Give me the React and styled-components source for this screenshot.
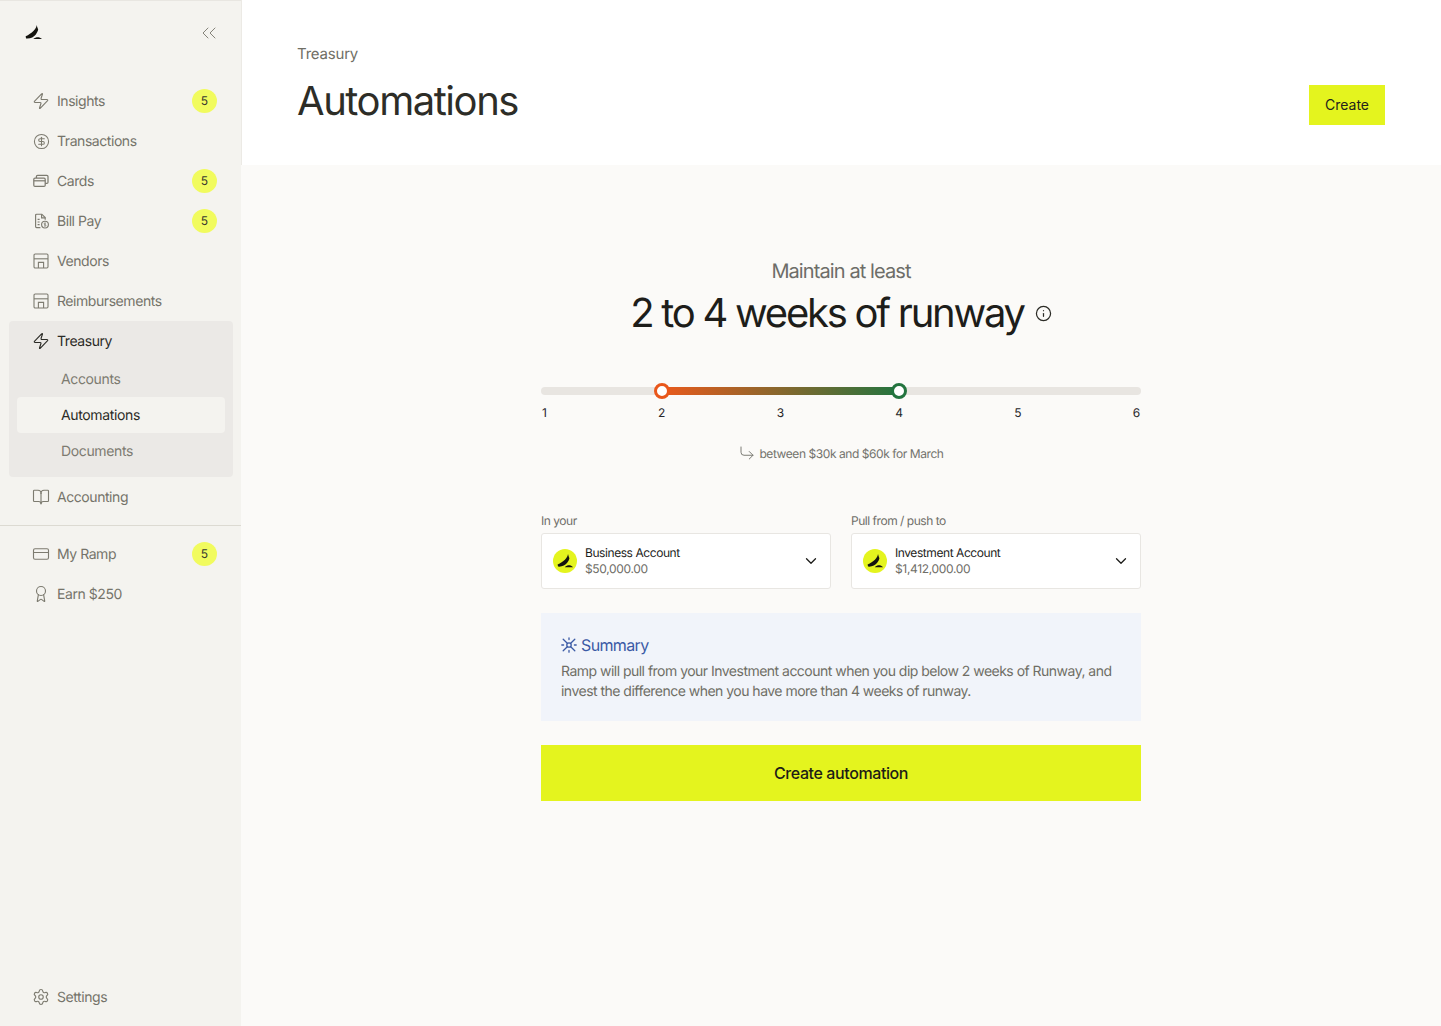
import styled, { createGlobalStyle } from "styled-components";
import {
  Award,
  BookOpen,
  ChevronDown,
  ChevronsLeft,
  CircleDollarSign,
  CornerDownRight,
  CreditCard,
  Info,
  Settings,
  Zap,
} from "lucide-react";

const GlobalStyle = createGlobalStyle`
  html, body {
    margin: 0;
    padding: 0;
    background: #fff;
    font-family: Inter, "Liberation Sans", sans-serif;
    text-rendering: geometricPrecision;
    -webkit-font-smoothing: antialiased;
  }
  * { box-sizing: border-box; }
`;

const Page = styled.div`
  display: flex;
  width: 1441px;
  height: 1026px;
  overflow: hidden;
`;

const Sidebar = styled.aside`
  display: flex;
  flex-direction: column;
  flex: 0 0 241px;
  height: 100%;
  padding-bottom: 9px;
  background: #f4f3ef;
  border-top: 1px solid #e8e6e1;
`;

const LogoRow = styled.div`
  display: flex;
  align-items: center;
  justify-content: space-between;
  height: 63px;
  padding: 0 20px 0 25px;
  margin-bottom: 17px;
`;

const CollapseButton = styled.span`
  display: flex;
  color: #85837a;
`;

const NavList = styled.nav`
  display: flex;
  flex-direction: column;
  padding: 0 8px 0 9px;
`;

const NavRow = styled.div`
  display: flex;
  align-items: center;
  gap: 7px;
  height: 40px;
  padding: 0 16px 0 23px;
  font-size: 14px;
  letter-spacing: -0.44px;
  color: ${(p) => (p.$active ? "#2b2b26" : "#75736a")};

  svg {
    flex: none;
  }
`;

const NavIconSlot = styled.span`
  display: flex;
  align-items: center;
  justify-content: center;
  width: 18px;
  height: 18px;
  color: ${(p) => (p.$active ? "#2b2b26" : "#7d7b70")};
`;

const NavLabel = styled.span`
  flex: 1;
`;

const Badge = styled.span`
  display: flex;
  align-items: center;
  justify-content: center;
  width: 25px;
  height: 24px;
  padding-bottom: 1px;
  border-radius: 50%;
  background: #f1fb5e;
  color: #3a3a30;
  font-size: 12px;
  letter-spacing: 0;
`;

const NavGroup = styled.div`
  display: flex;
  flex-direction: column;
  height: 156px;
  padding-bottom: 8px;
  border-radius: 4px;
  background: #ebe9e6;
`;

const SubList = styled.div`
  display: flex;
  flex-direction: column;
  padding: 0 8px;
`;

const SubRow = styled.div`
  display: flex;
  align-items: center;
  height: 36px;
  padding-left: 44px;
  border-radius: 4px;
  font-size: 14px;
  letter-spacing: -0.36px;
  background: ${(p) => (p.$active ? "#f4f3ef" : "transparent")};
  color: ${(p) => (p.$active ? "#2b2b26" : "#7d7b71")};
`;

const Divider = styled.hr`
  width: 100%;
  height: 1px;
  margin: 8px 0 8px;
  border: 0;
  background: #dcdad2;
`;

const Spacer = styled.div`
  flex: 1;
`;

const Content = styled.main`
  display: flex;
  flex-direction: column;
  flex: 1;
  min-width: 0;
`;

const Header = styled.header`
  display: flex;
  align-items: flex-end;
  justify-content: space-between;
  flex: 0 0 165px;
  padding: 0 56px 40px 55px;
  background: #fff;
  border-left: 1px solid #eceae5;
`;

const HeaderText = styled.div`
  display: flex;
  flex-direction: column;
  gap: 11px;
`;

const Crumb = styled.div`
  font-size: 15px;
  line-height: 24px;
  letter-spacing: -0.2px;
  color: #6f6e65;
`;

const PageTitle = styled.h1`
  margin: 0;
  font-size: 40px;
  line-height: 48px;
  font-weight: 400;
  letter-spacing: -1.45px;
  color: #2d2d27;
`;

const CreateButton = styled.button`
  width: 76px;
  height: 40px;
  padding: 0 0 2px;
  border: 0;
  background: #e4f41e;
  color: #23231c;
  font: 400 14px Inter, sans-serif;
`;

const Body = styled.section`
  flex: 1;
  display: flex;
  justify-content: center;
  padding-top: 94px;
  background: #fbfaf8;
`;

const Column = styled.div`
  display: flex;
  flex-direction: column;
  width: 600px;
`;

const Eyebrow = styled.div`
  text-align: center;
  font-size: 20px;
  line-height: 24px;
  letter-spacing: -0.9px;
  color: #6d6d68;
`;

const Headline = styled.h2`
  display: flex;
  align-items: center;
  justify-content: center;
  gap: 11px;
  margin: 6px 0 0;
  font-size: 40px;
  line-height: 48px;
  font-weight: 400;
  letter-spacing: -2.25px;
  color: #1d1d1a;

  svg {
    color: #2b2b26;
  }
`;

const Slider = styled.div`
  position: relative;
  height: 8px;
  margin-top: 50px;
  border-radius: 4px;
  background: #e8e5e1;
`;

const SliderFill = styled.div`
  position: absolute;
  top: 0;
  bottom: 0;
  background: linear-gradient(90deg, #ea5a1c, #23743f);
`;

const Thumb = styled.span`
  position: absolute;
  top: -4px;
  width: 16px;
  height: 16px;
  margin-left: -8px;
  border-radius: 50%;
  background: #fff;
  border: 3px solid ${(p) => p.$color};
`;

const Ticks = styled.div`
  display: flex;
  justify-content: space-between;
  margin-top: 10px;
  padding: 0 1px;
  font-size: 12px;
  line-height: 16px;
  letter-spacing: -0.2px;
  color: #27272a;
`;

const Range = styled.div`
  display: flex;
  align-items: center;
  justify-content: center;
  gap: 3px;
  height: 16px;
  margin-top: 24px;
  font-size: 12px;
  letter-spacing: -0.43px;
  color: #73736d;
`;

const Fields = styled.div`
  display: grid;
  grid-template-columns: 1fr 1fr;
  gap: 20px;
  margin-top: 52px;
`;

const FieldLabel = styled.div`
  margin-bottom: 4px;
  font-size: 12px;
  line-height: 16px;
  letter-spacing: -0.47px;
  color: #6f6e68;
`;

const Select = styled.div`
  display: flex;
  align-items: center;
  height: 56px;
  padding: 0 10px 0 11px;
  gap: 8px;
  background: #fff;
  border: 1px solid #e8e6e2;
  border-radius: 3px;
`;

const AccountLogo = styled.span`
  display: flex;
  align-items: center;
  justify-content: center;
  width: 24px;
  height: 24px;
  flex: none;
  border-radius: 50%;
  background: #e4f41e;
`;

const AccountText = styled.div`
  flex: 1;
  line-height: 16px;
  font-size: 12px;
`;

const AccountName = styled.div`
  letter-spacing: -0.43px;
  color: #1d1d1a;
`;

const AccountBalance = styled.div`
  letter-spacing: -0.33px;
  color: #6f6e68;
`;

const SummaryBox = styled.div`
  height: 108px;
  margin-top: 24px;
  padding: 20px;
  background: #f1f4fa;
`;

const SummaryTitle = styled.div`
  display: flex;
  align-items: center;
  gap: 4px;
  font-size: 16px;
  line-height: 24px;
  letter-spacing: -0.63px;
  color: #3b5aa5;
`;

const SummaryText = styled.p`
  margin: 5px 0 0;
  font-size: 14px;
  line-height: 20px;
  letter-spacing: -0.52px;
  color: #6f6e65;
`;

const SubmitButton = styled.button`
  height: 56px;
  margin-top: 24px;
  border: 0;
  background: #e4f41e;
  color: #1d1d16;
  font: 500 16px Inter, sans-serif;
  letter-spacing: -0.4px;
`;

const iconProps = { size: 18, strokeWidth: 1.5 };

function RampMark({ size = 16 }) {
  return (
    <svg width={size} height={size} viewBox="0 0 16 16" fill="#14140f">
      <path d="M11 1 C10.8 4.5 6.5 9 0.6 11.6 L1 13.6 C5 14 8.4 12.2 10.2 9.8 C11.4 8.2 12.2 6.4 12.4 5.2 C11.8 3.8 11.3 2.4 11 1 Z" />
      <path d="M7.8 14.2 C9.4 12.5 12 12 13.6 12.6 C14.6 13 15.5 13.6 16 14.2 Z" />
    </svg>
  );
}

function CardsIcon() {
  return (
    <svg width="16" height="16" viewBox="0 0 16 16" fill="none" stroke="currentColor" strokeWidth="1.25">
      <rect x="0.8" y="5" width="11.4" height="8.4" rx="1.2" />
      <path d="M0.8 7.8h11.4" />
      <path d="M3.4 5V3.6c0-.7.5-1.2 1.2-1.2h9.2c.7 0 1.2.5 1.2 1.2v5.6c0 .7-.5 1.2-1.2 1.2h-1.6" />
    </svg>
  );
}

function BillIcon() {
  return (
    <svg width="16" height="16" viewBox="0 0 16 16" fill="none" stroke="currentColor" strokeWidth="1.15">
      <path d="M7.4 14.6H3.6c-.6 0-1-.4-1-1V2.2c0-.6.4-1 1-1h5.2l3.4 3.4v2.2" />
      <path d="M8.6 1.2v3.6h3.6" />
      <path d="M4.6 6.4h2M4.6 9h2M4.6 11.6h2" />
      <circle cx="12" cy="11.6" r="3.4" />
      <path d="M13 10.4c-.5-.5-2-.5-2 .5s2 .5 2 1.4-1.5 1-2 .4M12 9.6v4" strokeWidth=".7" />
    </svg>
  );
}

function StoreIcon() {
  return (
    <svg width="16" height="16" viewBox="0 0 16 16" fill="none" stroke="currentColor" strokeWidth="1.1">
      <rect x="1" y="1" width="14" height="14" rx="1.2" />
      <path d="M1 5.8h14" />
      <path d="M5.4 15V9.4h5.2V15" />
    </svg>
  );
}

function SummaryIcon() {
  return (
    <svg width="16" height="16" viewBox="0 0 16 16" fill="none" stroke="#3b5aa5" strokeWidth="1.3" strokeLinecap="round">
      <circle cx="8" cy="8" r="2.2" />
      <path d="M2.2 2.2l4.1 4.1M9.7 9.7l4.1 4.1M2.2 13.8l4.1-4.1M9.7 6.3l4.1-4.1" />
      <path d="M8 .8v1.8M8 13.4v1.8M.8 8h1.8M13.4 8h1.8" />
    </svg>
  );
}

const topItems = [
  { label: "Insights", icon: <Zap {...iconProps} />, badge: 5 },
  { label: "Transactions", icon: <CircleDollarSign size={17} strokeWidth={1.5} /> },
  { label: "Cards", icon: <CardsIcon />, badge: 5 },
  { label: "Bill Pay", icon: <BillIcon />, badge: 5 },
  { label: "Vendors", icon: <StoreIcon /> },
  { label: "Reimbursements", icon: <StoreIcon /> },
];

const accounts = [
  { label: "In your", name: "Business Account", balance: "$50,000.00" },
  { label: "Pull from / push to", name: "Investment Account", balance: "$1,412,000.00" },
];

function NavItem({ label, icon, badge, active }) {
  return (
    <NavRow $active={active}>
      <NavIconSlot $active={active}>{icon}</NavIconSlot>
      <NavLabel>{label}</NavLabel>
      {badge && <Badge>{badge}</Badge>}
    </NavRow>
  );
}

const tickGap = 118.6;
const thumbLeft = (week) => (week - 1) * tickGap + 2;

export default function App() {
  return (
    <Page>
      <GlobalStyle />
      <Sidebar>
        <LogoRow>
          <RampMark size={17} />
          <CollapseButton>
            <ChevronsLeft size={24} strokeWidth={1} />
          </CollapseButton>
        </LogoRow>
        <NavList>
          {topItems.map((item) => (
            <NavItem key={item.label} {...item} />
          ))}
          <NavGroup>
            <NavItem label="Treasury" icon={<Zap {...iconProps} />} active />
            <SubList>
              <SubRow>Accounts</SubRow>
              <SubRow $active>Automations</SubRow>
              <SubRow>Documents</SubRow>
            </SubList>
          </NavGroup>
          <NavItem label="Accounting" icon={<BookOpen {...iconProps} />} />
        </NavList>
        <Divider />
        <NavList>
          <NavItem label="My Ramp" icon={<CreditCard {...iconProps} />} badge={5} />
          <NavItem label="Earn $250" icon={<Award {...iconProps} />} />
        </NavList>
        <Spacer />
        <NavList>
          <NavItem label="Settings" icon={<Settings {...iconProps} />} />
        </NavList>
      </Sidebar>
      <Content>
        <Header>
          <HeaderText>
            <Crumb>Treasury</Crumb>
            <PageTitle>Automations</PageTitle>
          </HeaderText>
          <CreateButton>Create</CreateButton>
        </Header>
        <Body>
          <Column>
            <Eyebrow>Maintain at least</Eyebrow>
            <Headline>
              2 to 4 weeks of runway
              <Info size={17} strokeWidth={1.75} />
            </Headline>
            <Slider>
              <SliderFill
                style={{
                  left: thumbLeft(2),
                  width: thumbLeft(4) - thumbLeft(2),
                }}
              />
              <Thumb $color="#e9571b" style={{ left: thumbLeft(2) }} />
              <Thumb $color="#23743f" style={{ left: thumbLeft(4) }} />
            </Slider>
            <Ticks>
              {[1, 2, 3, 4, 5, 6].map((week) => (
                <span key={week}>{week}</span>
              ))}
            </Ticks>
            <Range>
              <CornerDownRight size={18} strokeWidth={1.25} />
              between $30k and $60k for March
            </Range>
            <Fields>
              {accounts.map((account) => (
                <div key={account.name}>
                  <FieldLabel>{account.label}</FieldLabel>
                  <Select>
                    <AccountLogo>
                      <RampMark size={16} />
                    </AccountLogo>
                    <AccountText>
                      <AccountName>{account.name}</AccountName>
                      <AccountBalance>{account.balance}</AccountBalance>
                    </AccountText>
                    <ChevronDown size={18} strokeWidth={1.75} color="#1d1d1a" />
                  </Select>
                </div>
              ))}
            </Fields>
            <SummaryBox>
              <SummaryTitle>
                <SummaryIcon />
                Summary
              </SummaryTitle>
              <SummaryText>
                Ramp will pull from your Investment account when you dip below 2 weeks of Runway, and
                invest the difference when you have more than 4 weeks of runway.
              </SummaryText>
            </SummaryBox>
            <SubmitButton>Create automation</SubmitButton>
          </Column>
        </Body>
      </Content>
    </Page>
  );
}
